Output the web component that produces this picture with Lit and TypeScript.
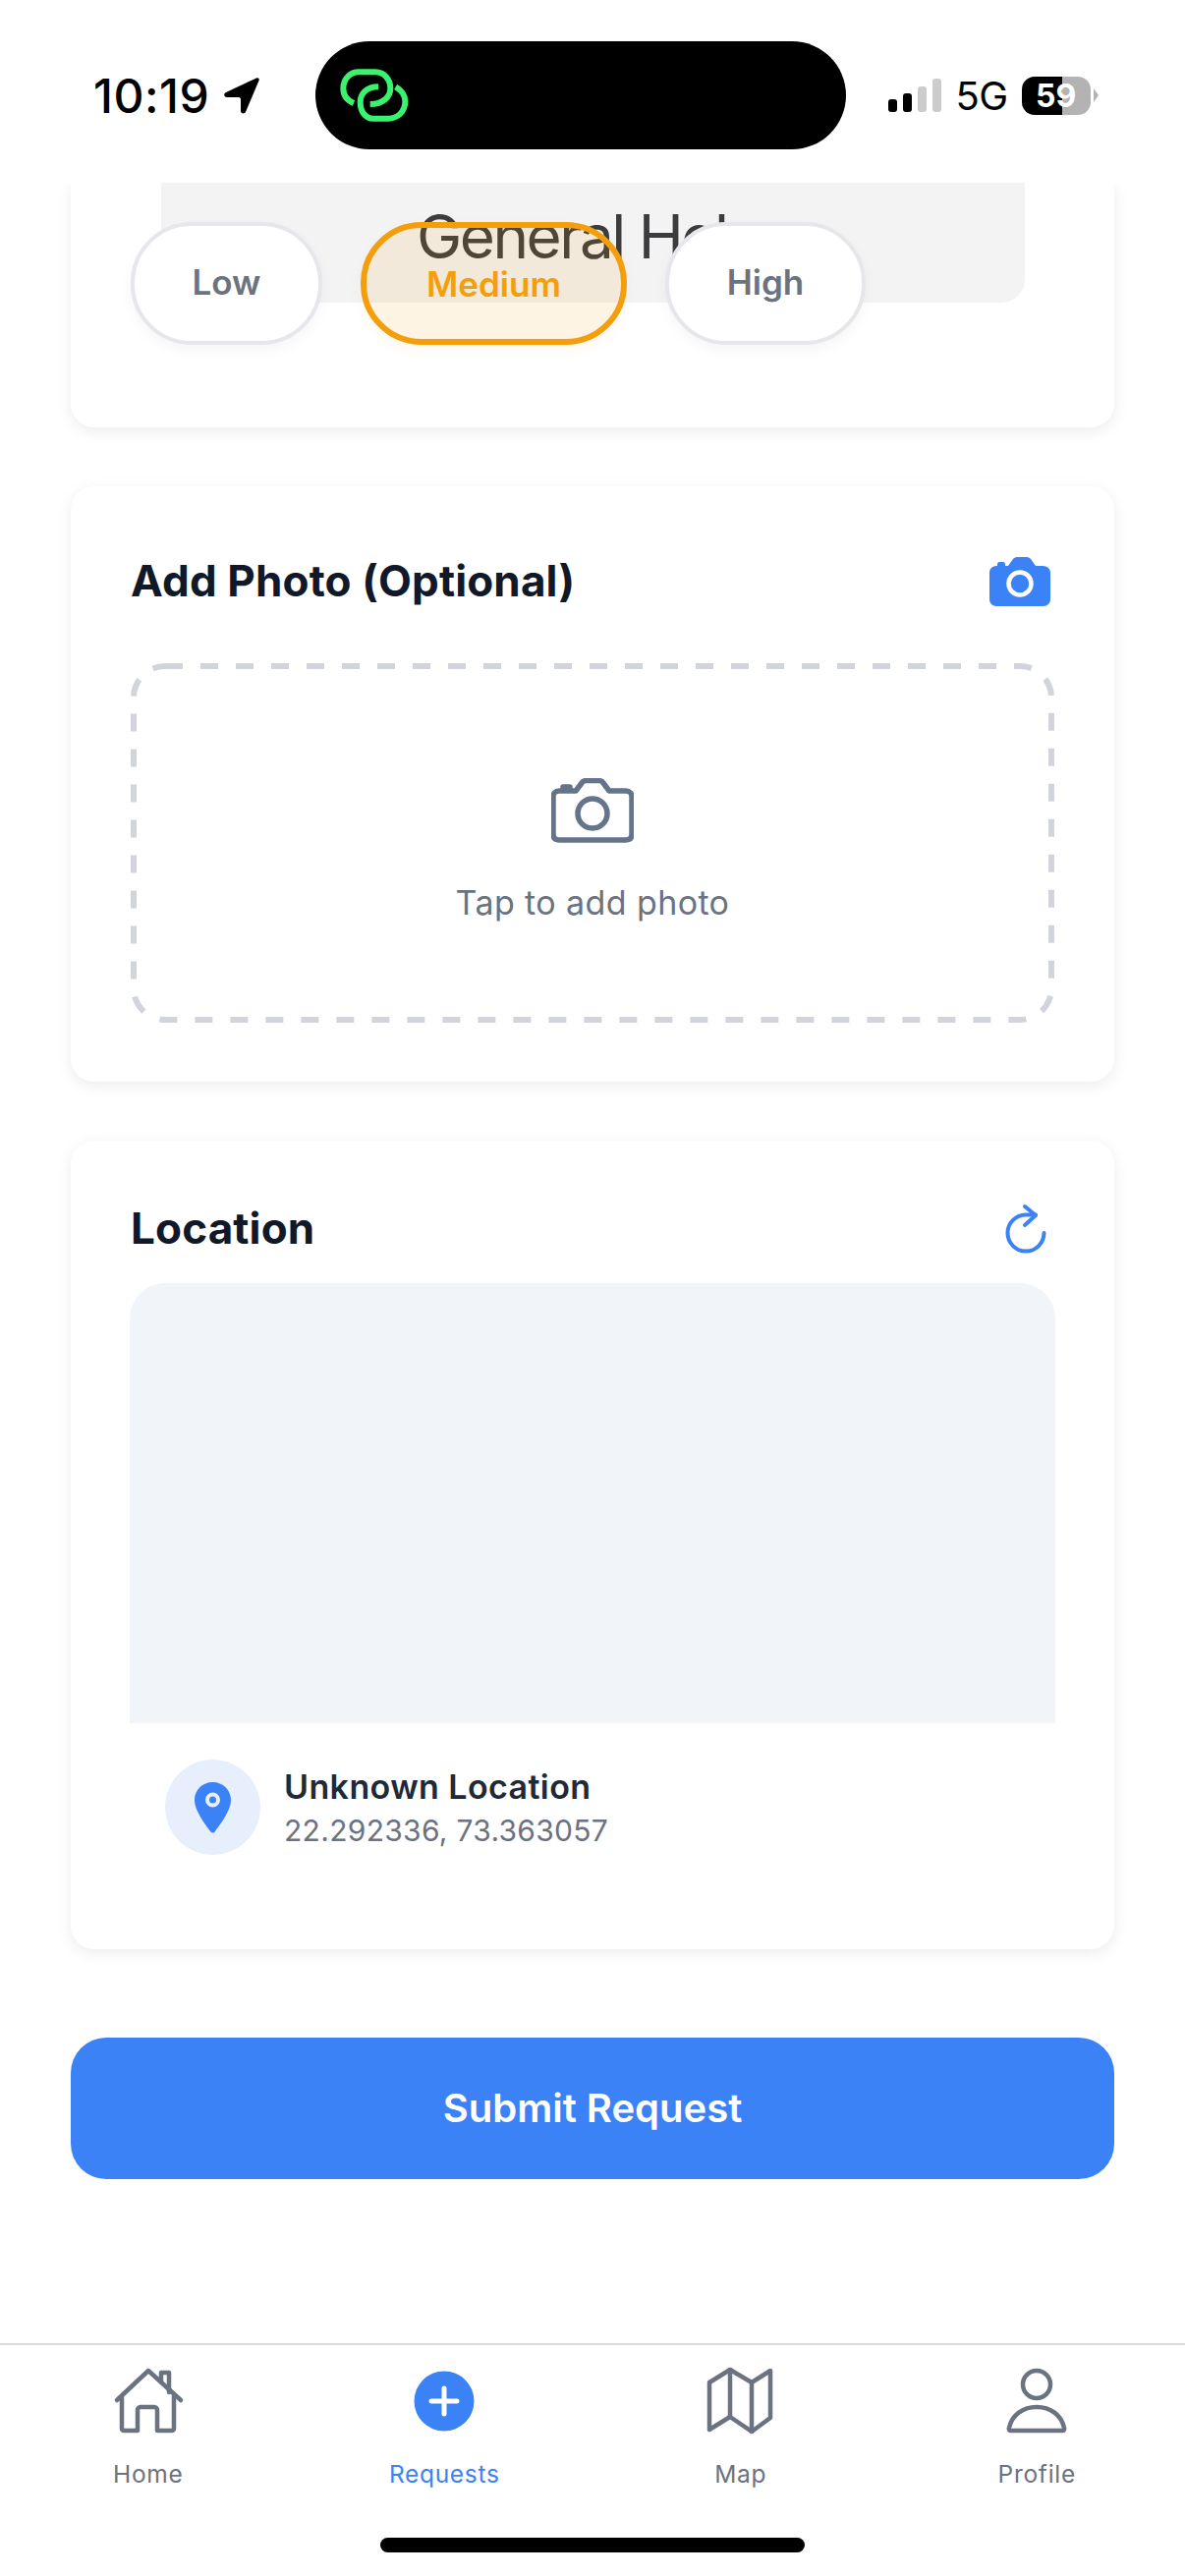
import { LitElement, css, html, svg } from 'lit';
import { customElement } from 'lit/decorators.js';

const navIcons = {
  home: svg`<path d="M5 34 37 4l33 30" /><path d="M10 30v33a2 2 0 0 0 2 2h14V44a3 3 0 0 1 3-3h14a3 3 0 0 1 3 3v21h15a2 2 0 0 0 2-2V30" /><path d="M50 15V6h8v20" />`,
  map: svg`<path d="M3 16 24 3l22 13L65 4v48L46 66 24 51 3 64Z" /><path d="M24 3v48M46 16v50" />`,
  profile: svg`<circle cx="35" cy="18" r="14" /><path d="M7 62a2 2 0 0 0 2 3h52a2 2 0 0 0 2-3C60 49 49 41 35 41S10 49 7 62Z" />`,
};

@customElement('app-root')
export class AppRoot extends LitElement {
  static styles = css`
    :host {
      display: flex;
      flex-direction: column;
      width: 1206px;
      height: 2622px;
      overflow: hidden;
      background: #fff;
      font-family: Inter, 'Liberation Sans', sans-serif;
    }

    .status {
      flex: none;
      height: 186px;
      display: flex;
      align-items: center;
      box-sizing: border-box;
      padding: 8px 0 0 95px;
    }
    .time {
      width: 130px;
      font-size: 48px;
      font-weight: 500;
      letter-spacing: 0.5px;
      color: #000;
    }
    .arrow { width: 36px; height: 37px; margin: 0 57px 0 3px; }
    .island {
      position: relative;
      width: 540px;
      height: 110px;
      border-radius: 55px;
      background: #000;
    }
    .island svg { position: absolute; left: 9px; top: 18px; }
    .signal { display: flex; align-items: flex-end; gap: 6.5px; margin-left: 43px; height: 34px; }
    .signal i { width: 8.5px; border-radius: 3px; background: #000; }
    .signal i.off { background: #ccc; }
    .signal .b1 { height: 13px; }
    .signal .b2 { height: 19px; }
    .signal .b3 { height: 26px; }
    .signal .b4 { height: 34px; }
    .net { margin-left: 15px; font-size: 40px; font-weight: 400; color: #000; letter-spacing: -0.5px; }
    .battery {
      display: flex;
      align-items: center;
      justify-content: center;
      width: 70px;
      height: 39px;
      margin-left: 14px;
      border-radius: 13px;
      overflow: hidden;
      background: linear-gradient(90deg, #000 0 58.5%, #b3b3b3 58.5%);
      font-size: 32px;
      font-weight: 700;
      color: #fff;
    }
    .cap {
      width: 0;
      height: 0;
      margin-left: 3px;
      border-left: 5px solid #b3b3b3;
      border-top: 7px solid transparent;
      border-bottom: 7px solid transparent;
    }

    .scroll {
      flex: 1;
      min-height: 0;
      overflow: hidden;
      display: flex;
      flex-direction: column;
      gap: 60px;
      padding: 0 72px;
    }
    .card {
      flex: none;
      box-sizing: border-box;
      border-radius: 24px;
      background: #fff;
      box-shadow: 0 4px 16px rgba(0, 0, 0, 0.08);
      padding: 0 61px;
    }

    .priority { height: 249px; border-radius: 0 0 24px 24px; }
    .picker {
      height: 122px;
      width: 879px;
      margin-left: 31px;
      border-radius: 0 0 24px 24px;
      background: #f3f3f4;
      overflow: hidden;
    }
    .picker span {
      display: block;
      padding: 24px 0 0 260px;
      font-size: 62px;
      line-height: 62px;
      font-weight: 400;
      letter-spacing: -2.5px;
      color: #3c3c3e;
      white-space: nowrap;
    }
    .pills { display: flex; margin: -82px 0 0; gap: 39px; }
    .pill {
      display: flex;
      align-items: center;
      justify-content: center;
      box-sizing: border-box;
      height: 125px;
      padding-bottom: 4px;
      border-radius: 62px;
      border: 4px solid #e5e7eb;
      background: #fff;
      box-shadow: 0 6px 14px rgba(0, 0, 0, 0.04);
      font-size: 35px;
      font-weight: 600;
      color: #6b7280;
    }
    .pill.low { width: 195px; }
    .pill.medium {
      width: 271px;
      padding-bottom: 0;
      border: 6px solid #f59e0b;
      background: rgba(245, 158, 11, 0.11);
      color: #f59e0b;
      box-shadow: 0 6px 14px rgba(245, 158, 11, 0.06);
    }
    .pill.high { width: 204px; }

    .head { display: flex; align-items: center; justify-content: space-between; height: 64px; }
    h2 { margin: 0 0 3px; font-size: 44px; font-weight: 700; letter-spacing: 0.15px; color: #111827; }

    .photo { height: 606px; padding-top: 65px; }
    .photo .head { padding-right: 4px; }
    .drop {
      position: relative;
      box-sizing: border-box;
      height: 366px;
      margin-top: 51px;
      display: flex;
      flex-direction: column;
      align-items: center;
      padding-top: 117px;
    }
    .drop .dash { position: absolute; left: 0; top: 0; }
    .drop p { margin: 40px 0 0; font-size: 34px; letter-spacing: 0.4px; color: #6b7280; }

    .location { height: 823px; padding-top: 58px; }
    .location .head { padding-right: 5px; }
    .mapbox {
      height: 448px;
      margin: 23px -1px 0;
      border-radius: 36px 36px 0 0;
      background: #f1f4f9;
    }
    .place { display: flex; align-items: center; gap: 24px; margin: 37px 0 0 35px; }
    .pin {
      display: flex;
      align-items: center;
      justify-content: center;
      width: 97px;
      height: 97px;
      border-radius: 50%;
      background: #e8effc;
    }
    .place b { display: block; font-size: 34px; font-weight: 600; letter-spacing: 0.4px; color: #1f2937; line-height: 46px; }
    .place small { display: block; font-size: 30px; color: #6b7280; line-height: 42px; letter-spacing: 0.3px; }

    .submit {
      flex: none;
      box-sizing: border-box;
      height: 144px;
      margin-top: 30px;
      padding-bottom: 2px;
      border-radius: 36px;
      background: #3b82f6;
      color: #fff;
      font-size: 40px;
      font-weight: 600;
      display: flex;
      align-items: center;
      justify-content: center;
    }

    .tabs {
      flex: none;
      height: 237px;
      box-sizing: border-box;
      border-top: 2px solid #dcdcdc;
      display: grid;
      grid-template-columns: repeat(4, 301.5px);
      position: relative;
    }
    .tab {
      display: flex;
      flex-direction: column;
      align-items: center;
      padding-top: 22px;
      font-size: 24.5px;
      letter-spacing: 0.7px;
      color: #6b7280;
    }
    .tab.on { color: #3b82f6; }
    .glyph { height: 70px; margin-bottom: 24px; display: flex; align-items: center; }
    .tab svg { display: block; }
    .tab .line { fill: none; stroke: #6b7280; stroke-width: 4.5; stroke-linejoin: round; stroke-linecap: round; }
    .bar {
      position: absolute;
      left: 387px;
      bottom: 24px;
      width: 432px;
      height: 15px;
      border-radius: 8px;
      background: #000;
    }
  `;

  render() {
    return html`
      <div class="status">
        <div class="time">10:19</div>
        <svg class="arrow" viewBox="0 0 36 37"><path d="M33 .5 2 15c-3 1.500-2 5 1 5h12c1 0 2 1 2 2v12c0 3 4 3 5 1L35.500 3c1-2-1-3.500-2.500-2.500Z" /></svg>
        <div class="island">
          <svg width="100" height="80" viewBox="0 0 300 240" fill="none" stroke="#3bf26f" stroke-width="18">
            <path d="M90 135C65 125 58 105 58 90 58 60 80 40 105 40h50c30 0 47 25 47 50 0 25-22 48-62 48" />
            <path d="M218 85c17 10 29 27 29 45 0 30-22 52-52 52h-45c-25 0-40-22-40-50 0-27 20-47 55-47" />
          </svg>
        </div>
        <div class="signal">
          <i class="b1"></i><i class="b2"></i><i class="off b3"></i><i class="off b4"></i>
        </div>
        <div class="net">5G</div>
        <div class="battery">59</div>
        <div class="cap"></div>
      </div>

      <div class="scroll">
        <section class="card priority">
          <div class="picker"><span>General Help</span></div>
          <div class="pills">
            <div class="pill low">Low</div>
            <div class="pill medium">Medium</div>
            <div class="pill high">High</div>
          </div>
        </section>

        <section class="card photo">
          <div class="head">
            <h2>Add Photo (Optional)</h2>
            <svg width="62" height="50" viewBox="0 0 62 50">
              <path fill="#3b82f6" d="M7 9h1V7c0-1 1-2 2-2h4c1 0 2 1 2 2v2h3l5-7c1-1 2-2 4-2h10c2 0 3 1 4 2l5 7h7c5 0 8 3 8 7v27c0 4-3 7-7 7H7c-4 0-7-3-7-7V16c0-4 3-7 7-7Z" />
              <circle cx="31" cy="27" r="11.500" fill="#3b82f6" stroke="#fff" stroke-width="4.500" />
            </svg>
          </div>
          <div class="drop">
            <svg class="dash" width="940" height="366" fill="none" stroke="#d1d5db" stroke-width="6" stroke-dasharray="18 18">
              <rect x="3" y="3" width="934" height="360" rx="32" />
            </svg>
            <svg width="84" height="66" viewBox="0 0 84 66" fill="none" stroke="#64748b" stroke-width="5.500" stroke-linejoin="round">
              <path d="M8 13h17l6-8c1-2 3-2.500 5-2.500h12c2 0 4 .5 5 2.500l6 8h17c4 0 6 3 6 6v38c0 4-2 6-6 6H8c-4 0-6-2-6-6V19c0-3 2-6 6-6Z" />
              <circle cx="42" cy="36" r="15" />
              <path d="M12 11V9h7v2" fill="#64748b" />
            </svg>
            <p>Tap to add photo</p>
          </div>
        </section>

        <section class="card location">
          <div class="head">
            <h2>Location</h2>
            <svg width="48" height="54" viewBox="0 0 48 54" fill="none" stroke="#3b82f6" stroke-width="4" stroke-linecap="round" stroke-linejoin="round">
              <path d="M42.500 31A18.500 18.500 0 1 1 24 12.500h10" /><path d="M23 4l11 9-11 10" />
            </svg>
          </div>
          <div class="mapbox"></div>
          <div class="place">
            <div class="pin">
              <svg width="37" height="52" viewBox="0 0 37 52">
                <path fill="#3b82f6" d="M18.500 0C8 0 0 8 0 18c0 11 11 25 16 32 1.500 2 3.500 2 5 0 5-7 16-21 16-32C37 8 29 0 18.500 0Z" />
                <circle cx="18.500" cy="18" r="5.500" fill="#3b82f6" stroke="#e8effc" stroke-width="4" />
              </svg>
            </div>
            <div><b>Unknown Location</b><small>22.292336, 73.363057</small></div>
          </div>
        </section>

        <div class="submit">Submit Request</div>
      </div>

      <nav class="tabs">
        <div class="tab">
          <div class="glyph"><svg class="line" width="74" height="70" viewBox="0 0 74 70">${navIcons.home}</svg></div>
          Home
        </div>
        <div class="tab on">
          <div class="glyph">
            <svg width="62" height="62" viewBox="0 0 62 62"><circle cx="31" cy="31" r="30.500" fill="#3b82f6" /><path d="M31 18v26M18 31h26" stroke="#fff" stroke-width="5" stroke-linecap="round" /></svg>
          </div>
          Requests
        </div>
        <div class="tab">
          <div class="glyph"><svg class="line" width="70" height="70" viewBox="0 0 70 70">${navIcons.map}</svg></div>
          Map
        </div>
        <div class="tab">
          <div class="glyph"><svg class="line" width="70" height="70" viewBox="0 0 70 70">${navIcons.profile}</svg></div>
          Profile
        </div>
        <div class="bar"></div>
      </nav>
    `;
  }
}
